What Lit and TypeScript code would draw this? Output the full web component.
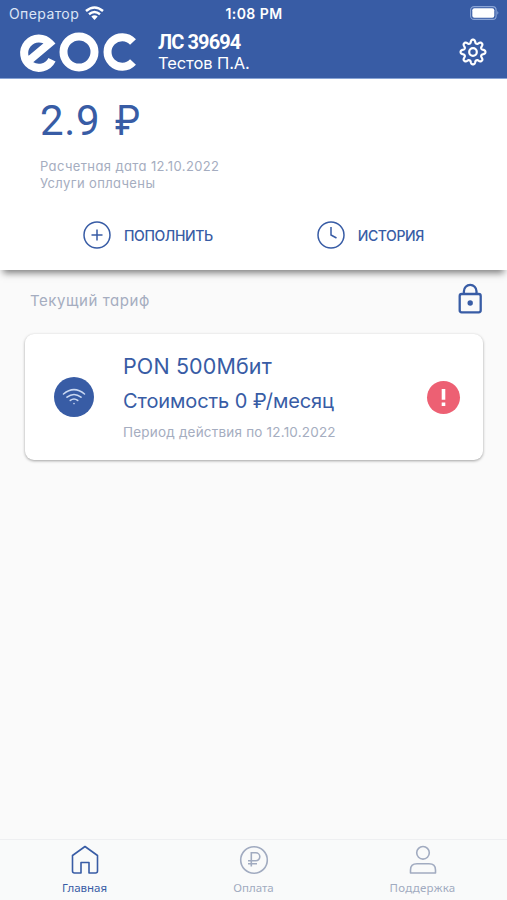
import { LitElement, html, css, svg } from "lit";
import { customElement } from "lit/decorators.js";

const gearPath = (() => {
  const points: string[] = [];
  for (let i = 0; i < 192; i++) {
    const a = (i / 192) * Math.PI * 2;
    const r = 10.7 + 1.7 * (Math.tanh(1.3 * Math.cos(8 * a)) / Math.tanh(1.3));
    points.push(`${(14 + r * Math.cos(a)).toFixed(2)} ${(14 + r * Math.sin(a)).toFixed(2)}`);
  }
  return `M${points.join("L")}Z`;
})();

const ruble = svg`<path d="M-3.200 7V-6.700H1.300A4 4 0 0 1 1.300 1.300H-6.500M-6.500 4.200H2.500"/>`;

@customElement("app-root")
export class AppRoot extends LitElement {
  static styles = css`
    :host { display: block; height: 900px; font-family: Inter, "Noto Sans", sans-serif; color: #385ca5; }
    * { box-sizing: border-box; }
    svg { display: block; fill: none; flex: none; overflow: visible; }
    .screen { height: 900px; display: flex; flex-direction: column; background: #fafafa; overflow: hidden; white-space: nowrap; }
    .top { height: 79px; flex: none; background: #385ca5; color: #fff; border-bottom: 1px solid #88a4d6; }
    .status { height: 28px; display: grid; grid-template-columns: 1fr auto 1fr; align-items: center; padding: 0 8px 2px 9px; }
    .carrier { display: flex; align-items: center; gap: 6px; font-size: 14px; letter-spacing: .4px; color: #dce5f6; }
    .time { font-size: 14px; font-weight: 600; letter-spacing: .45px; }
    .battery { justify-self: end; }
    .bar { height: 50px; display: flex; align-items: center; padding: 0 20px 2px; }
    .account { margin-left: 22px; flex: 1; }
    .number { font: 700 20px/22px Roboto, sans-serif; letter-spacing: -.9px; }
    .person { font-size: 16.5px; line-height: 21px; letter-spacing: -.1px; }
    .balance { height: 191px; flex: none; background: #fff; box-shadow: 0 6px 7px -3px rgba(0,0,0,.5); padding-top: 17px; position: relative; }
    .amount { margin-left: 40px; font: 400 42px/50px Roboto, sans-serif; letter-spacing: .6px; }
    .sign { display: inline-block; margin-left: 4px; transform: scaleX(.9); transform-origin: left; }
    .info { margin: 12px 0 0 40px; font-size: 13px; line-height: 17px; letter-spacing: .38px; color: #a5adc0; font-feature-settings: "cv11"; }
    .actions { display: flex; margin-top: 29px; }
    .action { display: flex; align-items: center; gap: 13px; font-size: 14px; font-weight: 500; letter-spacing: -.38px; height: 28px; }
    .pay { margin-left: 83px; }
    .history { margin-left: 104px; }
    .section { height: 64px; display: flex; align-items: center; justify-content: space-between; padding: 0 24px 6px 30px; flex: none; }
    .title { padding-top: 2px; font-size: 15px; letter-spacing: .55px; color: #a5adc0; font-feature-settings: "cv11"; }
    .card { margin: 0 24px 0 25px; height: 126px; flex: none; display: flex; align-items: center; padding: 0 23px 0 29px; border-radius: 9px; background: #fff; box-shadow: 0 1px 3px rgba(0,0,0,.36); }
    .badge { width: 40px; height: 40px; border-radius: 50%; background: #385ca5; display: grid; place-items: center; }
    .plan { margin-left: 29px; flex: 1; padding-top: 1px; }
    .name { font-size: 21.5px; line-height: 34px; letter-spacing: .12px; }
    .cost { font-size: 20px; line-height: 35px; padding-top: 1px; margin-bottom: -1px; letter-spacing: -.1px; }
    .period { font-size: 13.5px; line-height: 28px; letter-spacing: .2px; color: #a5adc0; }
    .nav { height: 61px; flex: none; margin-top: auto; border-top: 1px solid #eeeff1; background: #f9fafa; display: grid; grid-template-columns: repeat(3, 1fr); }
    .tab { display: flex; flex-direction: column; align-items: center; padding-top: 5px; color: #a1abc0; font: 400 11.5px/16px "Noto Sans", sans-serif; }
    .tab svg { margin-bottom: 5px; }
    .active { color: #385ca5; }
    .support { letter-spacing: .3px; }
  `;

  render() {
    return html`
      <div class="screen">
        <header class="top">
          <div class="status">
            <div class="carrier"><span>Оператор</span>
              <svg width="19" height="14" viewBox="0 0 19 14"><g stroke="#fff" stroke-width="2.5"><path d="M1 5Q9.500-2 18 5"/><path d="M4 8.200Q9.500 3.800 15 8.200"/></g><path fill="#fff" d="M6.300 10.500Q9.500 8 12.700 10.500L9.500 14Z"/></svg>
            </div>
            <div class="time">1:08 PM</div>
            <svg class="battery" width="29" height="14" viewBox="0 0 29 14"><rect x=".6" y=".6" width="25.500" height="12.800" rx="3.500" stroke="#8ba5d6" stroke-width="1.100"/><rect x="2.300" y="2.300" width="22" height="9.400" rx="2" fill="#fff"/><path d="M27.300 5Q29.500 6.800 27.300 8.800Z" fill="#8ba5d6"/></svg>
          </div>
          <div class="bar">
            <svg width="116" height="38" viewBox="0 0 116 38" stroke="#fff" stroke-width="8">
              <path d="M32 26.700A14.700 14.700 0 1 1 29.700 10.200L8.500 28"/>
              <circle cx="59" cy="19" r="15.500"/>
              <path d="M113 9A14.700 14.700 0 1 0 113 29"/>
            </svg>
            <div class="account"><div class="number">ЛС 39694</div><div class="person">Тестов П.А.</div></div>
            <svg width="28" height="28" viewBox="0 0 28 28" stroke="#fff" stroke-width="2.200"><path stroke-linejoin="round" d=${gearPath}/><circle cx="14" cy="14" r="3.800"/></svg>
          </div>
        </header>
        <section class="balance">
          <div class="amount">2.9 <span class="sign">₽</span></div>
          <div class="info"><div class="date">Расчетная дата 12.10.2022</div><div class="paid">Услуги оплачены</div></div>
          <div class="actions">
            <div class="action pay"><svg width="28" height="28" viewBox="0 0 28 28" stroke="currentColor" stroke-width="1.500"><circle cx="14" cy="14" r="13"/><path d="M8.500 14H19.500M14 8.500V19.500"/></svg><span>ПОПОЛНИТЬ</span></div>
            <div class="action history"><svg width="28" height="28" viewBox="0 0 28 28" stroke="currentColor" stroke-width="1.500"><circle cx="14" cy="14" r="13"/><path d="M14 6V14L19.500 17"/></svg><span>ИСТОРИЯ</span></div>
          </div>
        </section>
        <div class="section"><span class="title">Текущий тариф</span>
          <svg width="25" height="31" viewBox="0 0 25 31" stroke="currentColor" stroke-width="2.300"><rect x="1.700" y="10" width="21" height="18.300" rx="2"/><path d="M5.900 10V7.200A6.300 6.300 0 0 1 18.500 7.200V10"/><circle cx="12.200" cy="19" r="2.700" fill="currentColor" stroke="none"/></svg>
        </div>
        <article class="card">
          <div class="badge"><svg width="24" height="18" viewBox="0 0 24 18" stroke="#cbd9f2" stroke-width="1.600" stroke-linecap="round"><path d="M1.500 6Q12-2.600 22.500 6M5 9.200Q12 3.800 19 9.200M8.300 12.400Q12 9.600 15.700 12.400"/><path d="M12 15.500V15.600"/></svg></div>
          <div class="plan"><div class="name">PON 500Мбит</div><div class="cost">Стоимость 0 ₽/месяц</div><div class="period">Период действия по 12.10.2022</div></div>
          <svg width="33" height="33" viewBox="0 0 33 33"><circle cx="16.500" cy="16.500" r="16.500" fill="#ed6073"/><path d="M14.700 8H18.300V18.800H14.700ZM14.700 21.500H18.300V25H14.700Z" fill="#fff"/></svg>
        </article>
        <nav class="nav">
          <div class="tab active"><svg width="28" height="30" viewBox="0 0 28 30" stroke="currentColor" stroke-width="1.600" stroke-linejoin="round"><path d="M1.500 10.500L14 1.500L26.500 10.500V26Q26.500 28 24.500 28H18V17.500H10V28H3.500Q1.500 28 1.500 26Z"/></svg><span>Главная</span></div>
          <div class="tab"><svg width="30" height="30" viewBox="0 0 30 30" stroke="currentColor" stroke-width="1.600"><circle cx="15" cy="15" r="13.300"/><g transform="translate(15.500 14.500)">${ruble}</g></svg><span>Оплата</span></div>
          <div class="tab support"><svg width="28" height="30" viewBox="0 0 28 30" stroke="currentColor" stroke-width="1.600"><circle cx="14" cy="7.800" r="6.300"/><path stroke-linejoin="round" d="M1.500 28V25Q1.500 18.800 8 18.800H20Q26.500 18.800 26.500 25V28Z"/></svg><span>Поддержка</span></div>
        </nav>
      </div>`;
  }
}
